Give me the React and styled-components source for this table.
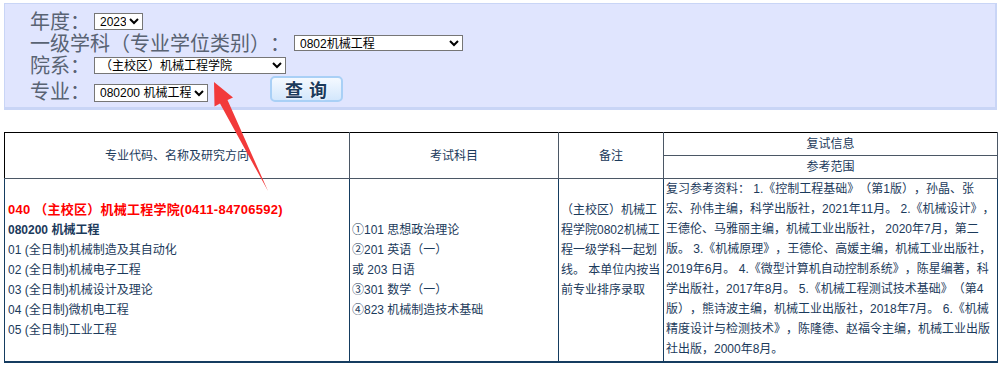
import React from "react";
import styled, { createGlobalStyle } from "styled-components";

const GlobalStyle = createGlobalStyle`
  body {
    margin: 0;
    background: #fff;
    font-family: "Liberation Sans", "Noto Sans CJK SC", sans-serif;
    text-spacing-trim: space-all;
  }
`;

const Page = styled.div`
  position: relative;
  width: 1000px;
  height: 365px;
  padding: 3px 0 0 4px;
  box-sizing: border-box;
  overflow: hidden;
`;

const SearchPanel = styled.form`
  width: 993px;
  height: 107px;
  box-sizing: border-box;
  background: #e0e5fe;
  border: 1px solid #c9d5f6;
  border-right-width: 2px;
  border-bottom-width: 3px;
  padding: 6px 0 0 25px;
`;

const FieldRow = styled.div`
  display: flex;
  align-items: ${({ bottom }) => (bottom ? "flex-end" : "center")};
  height: ${({ h }) => h}px;
`;

const Label = styled.span`
  display: block;
  height: 22px;
  font-family: "Noto Sans CJK SC", serif;
  font-size: 20px;
  line-height: 22px;
  color: #596373;
  white-space: nowrap;
  text-spacing-trim: space-all;
`;

const Select = styled.select`
  margin-left: 4px;
  width: ${({ w }) => w}px;
  height: ${({ h }) => h || 17}px;
  padding: 0 0 0 1px;
  font-family: "Liberation Sans", "Noto Sans CJK SC", sans-serif;
  font-size: 12px;
  color: #000;
  background: #fff;
  border: 1px solid #767676;
  border-radius: 0;
`;

const QueryButton = styled.button`
  margin-left: 62px;
  width: 73px;
  height: 26px;
  padding: 0;
  border: 2px solid #a9d0f6;
  border-radius: 5px;
  background: linear-gradient(#f4f9ff, #d3e7fc);
  font-family: "Noto Sans CJK SC", serif;
  font-weight: bold;
  font-size: 18px;
  line-height: 20px;
  letter-spacing: 1px;
  color: #1c3b5c;
  text-shadow: 0 0 2px #fff, 0 0 2px #fff;
  cursor: pointer;
`;

const Table = styled.table`
  margin-top: 22px;
  width: 993px;
  border-collapse: collapse;
  table-layout: fixed;
  font-size: 12px;
  color: #1b3a5b;
`;

const HeadCell = styled.th`
  height: 22px;
  padding: 0;
  font-weight: normal;
  font-size: 12px;
  line-height: 20px;
  border: 1px solid #4b5765;
  border-top-color: ${({ top }) => (top ? "#000" : "#4b5765")};
  border-left-color: ${({ first }) => (first ? "#000" : "#4b5765")};
`;

const BodyCell = styled.td`
  height: 182px;
  padding: 0 ${({ pad }) => pad || 2}px;
  vertical-align: ${({ top }) => (top ? "top" : "middle")};
  line-height: 20px;
  border: 1px solid #153c60;
  border-bottom-width: 2px;
  white-space: nowrap;
  overflow: hidden;
`;

const College = styled.div`
  color: #f00;
  font-weight: bold;
  font-size: 13px;
  letter-spacing: 0.25px;
`;

const Major = styled.div`
  font-weight: bold;
`;

const Arrow = styled.svg`
  position: absolute;
  left: 0;
  top: 0;
  pointer-events: none;
`;

const directions = [
  "01 (全日制)机械制造及其自动化",
  "02 (全日制)机械电子工程",
  "03 (全日制)机械设计及理论",
  "04 (全日制)微机电工程",
  "05 (全日制)工业工程",
];

const subjects = [
  "①101 思想政治理论",
  "②201 英语（一）",
  "或 203 日语",
  "③301 数学（一）",
  "④823 机械制造技术基础",
];

const remark = [
  "（主校区）机械工",
  "程学院0802机械工",
  "程一级学科一起划",
  "线。 本单位内按当",
  "前专业排序录取",
  "",
  "",
];

const reference = [
  "复习参考资料： 1.《控制工程基础》（第1版），孙晶、张",
  "宏、孙伟主编，科学出版社，2021年11月。 2.《机械设计》，",
  "王德伦、马雅丽主编，机械工业出版社， 2020年7月，第二",
  "版。 3.《机械原理》，王德伦、高媛主编，机械工业出版社，",
  "2019年6月。 4.《微型计算机自动控制系统》，陈星编著，科",
  "学出版社，2017年8月。 5.《机械工程测试技术基础》（第4",
  "版），熊诗波主编，机械工业出版社，2018年7月。 6.《机械",
  "精度设计与检测技术》，陈隆德、赵福令主编，机械工业出版",
  "社出版，2000年8月。",
];

const Lines = ({ items }) =>
  items.map((t, i) => <div key={i}>{t || "\u00a0"}</div>);

export default function App() {
  return (
    <Page>
      <GlobalStyle />
      <SearchPanel onSubmit={(e) => e.preventDefault()}>
        <FieldRow h={22}>
          <Label>年度：</Label>
          <Select w={49} defaultValue="2023">
            <option>2023</option>
          </Select>
        </FieldRow>
        <FieldRow h={22}>
          <Label>一级学科（专业学位类别）：</Label>
          <Select w={169} h={16} defaultValue="0802">
            <option value="0802">0802机械工程</option>
          </Select>
        </FieldRow>
        <FieldRow h={22}>
          <Label>院系：</Label>
          <Select w={192} defaultValue="040">
            <option value="040">（主校区）机械工程学院</option>
          </Select>
        </FieldRow>
        <FieldRow h={26} bottom>
          <Label>专业：</Label>
          <Select w={114} h={18} defaultValue="080200">
            <option value="080200">080200 机械工程</option>
          </Select>
          <QueryButton type="submit">查 询</QueryButton>
        </FieldRow>
      </SearchPanel>

      <Table>
        <colgroup>
          <col style={{ width: 345 }} />
          <col style={{ width: 209 }} />
          <col style={{ width: 105 }} />
          <col style={{ width: 334 }} />
        </colgroup>
        <thead>
          <tr>
            <HeadCell rowSpan={2} top first>
              专业代码、名称及研究方向
            </HeadCell>
            <HeadCell rowSpan={2} top>
              考试科目
            </HeadCell>
            <HeadCell rowSpan={2} top>
              备注
            </HeadCell>
            <HeadCell top>复试信息</HeadCell>
          </tr>
          <tr>
            <HeadCell>参考范围</HeadCell>
          </tr>
        </thead>
        <tbody>
          <tr>
            <BodyCell pad={3}>
              <College>040 （主校区）机械工程学院(0411-84706592)</College>
              <Major>080200 机械工程</Major>
              <Lines items={directions} />
            </BodyCell>
            <BodyCell>
              <Lines items={subjects} />
            </BodyCell>
            <BodyCell>
              <Lines items={remark} />
            </BodyCell>
            <BodyCell top>
              <Lines items={reference} />
            </BodyCell>
          </tr>
        </tbody>
      </Table>

      <Arrow width="1000" height="365" viewBox="0 0 1000 365">
        <polygon
          points="214,82 233,97.5 227.5,100 268,191 220,103.5 214.5,106.5"
          fill="#f23a3a"
        />
      </Arrow>
    </Page>
  );
}
